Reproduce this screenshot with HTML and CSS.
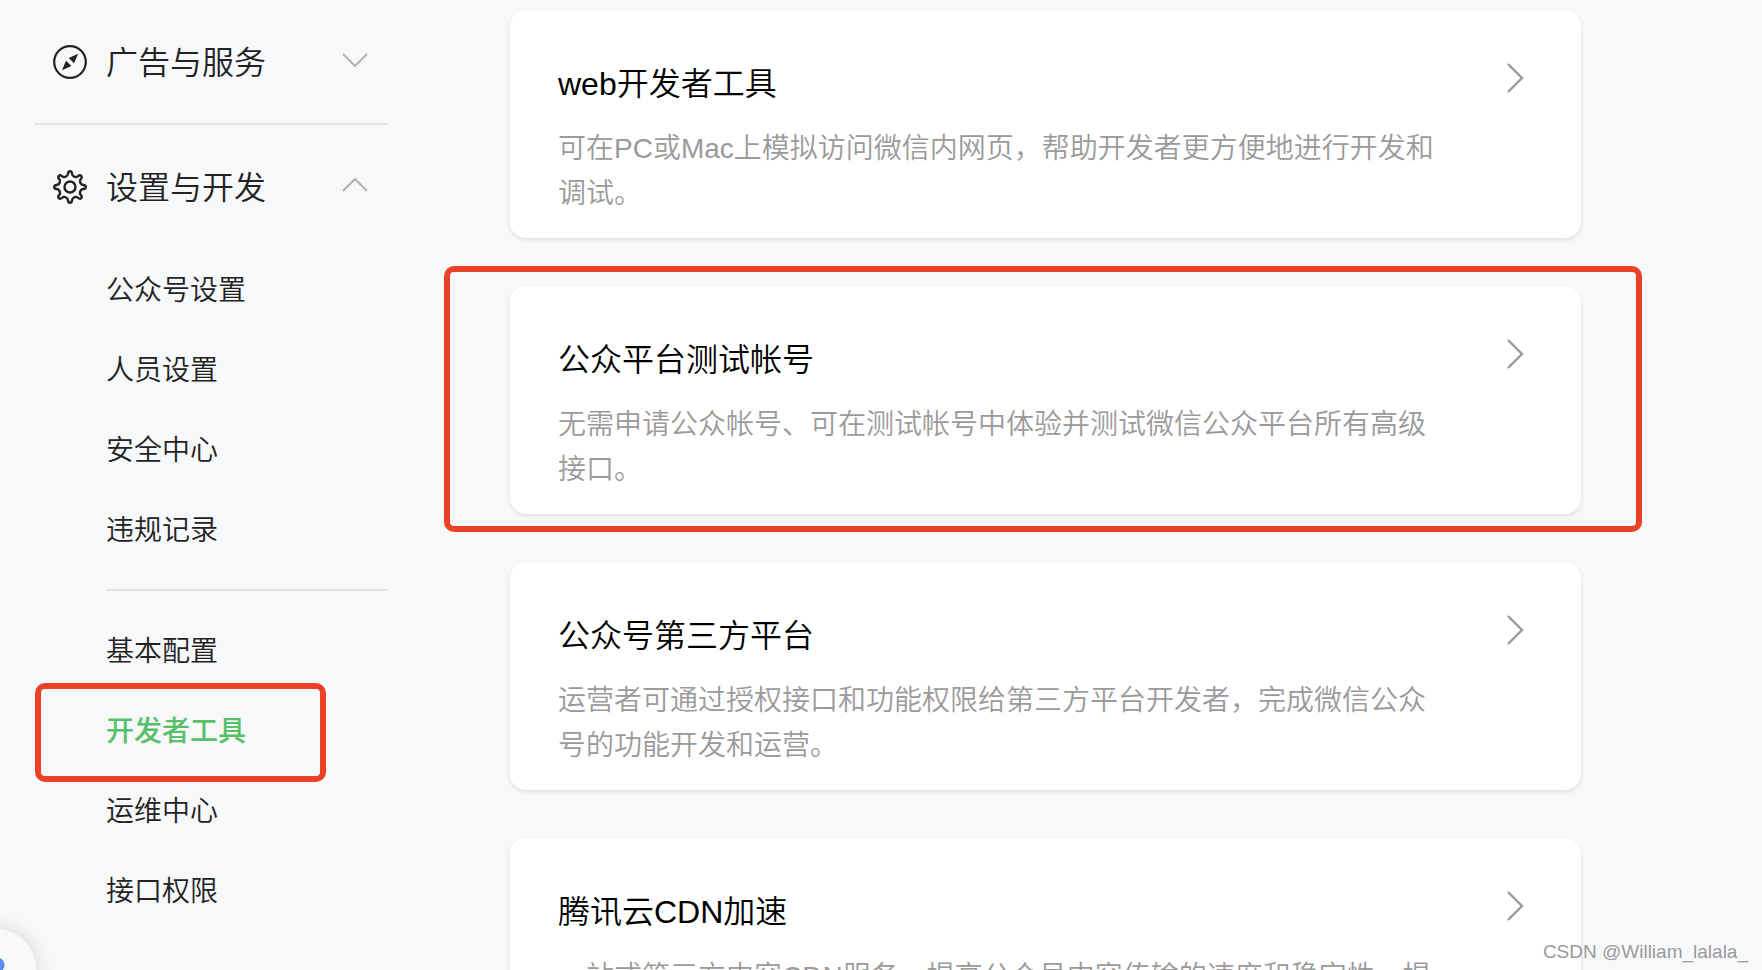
FILE: index.html
```html
<!DOCTYPE html>
<html lang="zh-CN">
<head>
  <meta charset="UTF-8" />
  <title>开发者工具</title>
  <meta name="viewport" content="width=device-width, initial-scale=1.0" />
  <link rel="stylesheet" href="styles.css">
</head>
<body>
  <div class="page">

    <nav class="sidebar">
      <button type="button" class="menu-title">
        <svg class="menu-icon" viewBox="0 0 34 34">
          <circle cx="17" cy="17" r="15.8" fill="none" stroke="#222" stroke-width="2.2"/>
          <path d="M25.2 8.8 L21 18.3 L15.7 13 Z M9 25.2 L13 15.8 L18.3 21 Z" fill="#222"/>
        </svg>
        <span class="menu-name">广告与服务</span>
        <svg class="menu-arrow" viewBox="0 0 26 14"><path d="M1 1 L13 13 L25 1"/></svg>
      </button>

      <hr class="divider">

      <button type="button" class="menu-title">
        <svg class="menu-icon" viewBox="0 0 34 34">
          <g fill="none" stroke="#222" stroke-width="2.4">
            <path id="gear-quarter" d="M17 1.2 Q18.8 1.2 19 3.6 C19.2 6 20 6.1 21.3 6.65 C22.6 7.2 23.3 7.8 25.06 6.1 Q26.9 4.6 28.17 5.83 Q29.4 7.1 27.9 8.94 C26.2 10.7 26.8 11.4 27.35 12.7 C27.9 14 28 14.8 30.4 15 Q32.8 15.2 32.8 17"/>
            <use href="#gear-quarter" transform="rotate(90 17 17)"/>
            <use href="#gear-quarter" transform="rotate(180 17 17)"/>
            <use href="#gear-quarter" transform="rotate(270 17 17)"/>
            <circle cx="17" cy="17" r="5.5"/>
          </g>
        </svg>
        <span class="menu-name">设置与开发</span>
        <svg class="menu-arrow" viewBox="0 0 26 14"><path d="M1 13 L13 1 L25 13"/></svg>
      </button>

      <div class="submenu">
        <a href="#">公众号设置</a>
        <a href="#">人员设置</a>
        <a href="#">安全中心</a>
        <a href="#">违规记录</a>
        <hr class="divider">
        <a href="#">基本配置</a>
        <a href="#" class="active">开发者工具</a>
        <a href="#">运维中心</a>
        <a href="#">接口权限</a>
      </div>
    </nav>

    <main class="tools">
      <a href="#" class="card">
        <div class="card-text">
          <h2>web开发者工具</h2>
          <p>可在PC或Mac上模拟访问微信内网页，帮助开发者更方便地进行开发和调试。</p>
        </div>
        <svg class="card-arrow" viewBox="0 0 18 32"><path d="M2 2 L16 16 L2 30"/></svg>
      </a>
      <a href="#" class="card marked">
        <div class="card-text">
          <h2>公众平台测试帐号</h2>
          <p>无需申请公众帐号、可在测试帐号中体验并测试微信公众平台所有高级接口。</p>
        </div>
        <svg class="card-arrow" viewBox="0 0 18 32"><path d="M2 2 L16 16 L2 30"/></svg>
      </a>
      <a href="#" class="card">
        <div class="card-text">
          <h2>公众号第三方平台</h2>
          <p>运营者可通过授权接口和功能权限给第三方平台开发者，完成微信公众号的功能开发和运营。</p>
        </div>
        <svg class="card-arrow" viewBox="0 0 18 32"><path d="M2 2 L16 16 L2 30"/></svg>
      </a>
      <a href="#" class="card">
        <div class="card-text">
          <h2>腾讯云CDN加速</h2>
          <p>一站式第三方内容CDN服务，提高公众号内容传输的速度和稳定性，提</p>
        </div>
        <svg class="card-arrow" viewBox="0 0 18 32"><path d="M2 2 L16 16 L2 30"/></svg>
      </a>
    </main>

  </div>

  <div class="float-ball"></div>
  <div class="watermark">CSDN @William_lalala_</div>
</body>
</html>
```
FILE: styles.css
```css
* {
  box-sizing: border-box;
}

body {
  margin: 0;
  height: 100vh;
  overflow: hidden;
  position: relative;
  background-color: #f7f8fa;
  font-family: "Liberation Sans", "Noto Sans CJK SC", sans-serif;
  font-weight: 350;
  color: #222;
}

a {
  color: inherit;
  text-decoration: none;
}

.page {
  display: flex;
}

/* left menu */
.sidebar {
  flex: none;
  width: 388px;
  padding-left: 34px;
}

.menu-title {
  display: flex;
  align-items: center;
  width: 100%;
  height: 123px;
  padding: 0 20px 0 19px;
  border: none;
  background: none;
  font: inherit;
  font-size: 32px;
  line-height: 45px;
  color: inherit;
  text-align: left;
  cursor: pointer;
}

.menu-icon {
  width: 34px;
  height: 34px;
}

.menu-name {
  flex: 1;
  margin-left: 19px;
  padding-top: 3px;
}

.menu-arrow {
  width: 26px;
  height: 14px;
  margin-bottom: 4px;
}

.menu-arrow path {
  fill: none;
  stroke: #b2b2b4;
  stroke-width: 2;
}

.divider {
  height: 2px;
  margin: 0;
  border: none;
  background-color: #e2e3e5;
}

.submenu {
  padding: 3px 0 0 72px;
}

.submenu .divider {
  margin: 18px 0 21px;
}

.submenu a {
  display: block;
  position: relative;
  font-size: 28px;
  line-height: 80px;
}

.submenu .active {
  color: #58c069;
  font-weight: 500;
}

/* red frames */
.active::after,
.marked::after {
  content: "";
  position: absolute;
  border: 6px solid #eb4127;
  border-radius: 10px;
}

.active::after {
  top: -9px;
  bottom: -10px;
  left: -71px;
  right: 62px;
}

.marked::after {
  top: -20px;
  bottom: -18px;
  left: -66px;
  right: -61px;
}

/* tool cards */
.tools {
  flex: 1;
  display: flex;
  flex-direction: column;
  gap: 48px;
  padding: 10px 181px 48px 122px;
}

.card {
  display: flex;
  justify-content: space-between;
  gap: 64px;
  position: relative;
  padding: 52px 57px 22px 48px;
  border-radius: 16px;
  background-color: #fff;
  box-shadow: 0 2px 4px rgba(0, 0, 0, 0.1);
}

.card h2 {
  margin: 0 0 19px;
  font-size: 32px;
  font-weight: inherit;
  line-height: 45px;
  color: #000;
}

.card p {
  margin: 0;
  font-size: 28px;
  line-height: 45px;
  color: #9a9a9a;
}

.card-arrow {
  flex: none;
  width: 18px;
  height: 32px;
}

.card-arrow path {
  fill: none;
  stroke: #999;
  stroke-width: 2.4;
}

/* floating round button in the corner */
.float-ball {
  position: absolute;
  left: -44px;
  bottom: -39px;
  width: 80px;
  height: 80px;
  border-radius: 50%;
  background: radial-gradient(circle at 41px 36px, #5b8def 7px, #f9f9f9 8px);
  box-shadow: 0 0 20px rgba(0, 0, 0, 0.15);
}

.watermark {
  position: absolute;
  right: 14px;
  bottom: 6px;
  font-size: 19px;
  line-height: 24px;
  color: #999;
  text-shadow: -1px -1px 0 #fff;
}
```
